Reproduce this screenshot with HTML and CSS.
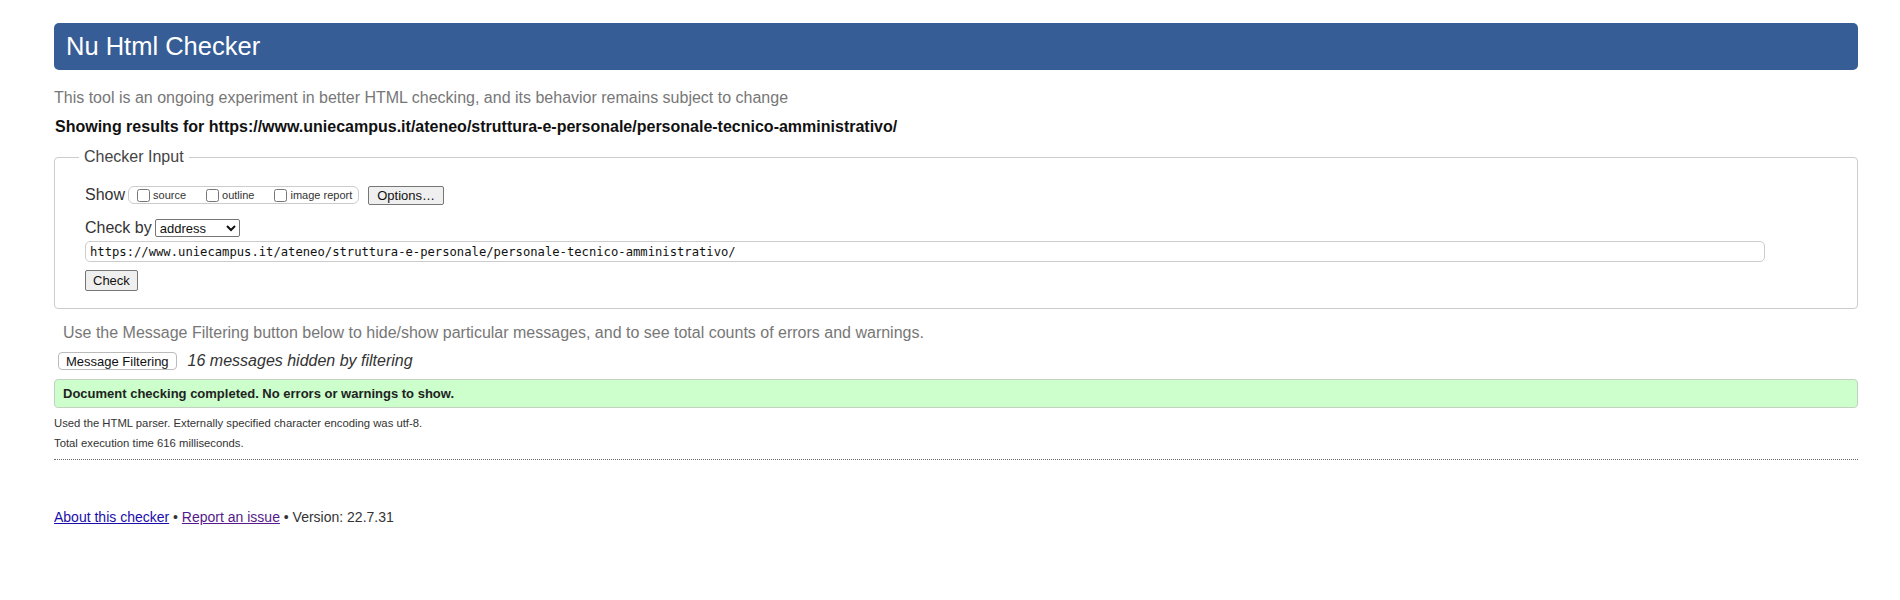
FILE: index.html
```html
<!DOCTYPE html>
<html lang="en">
<head>
  <meta charset="UTF-8">
  <title>Showing results for https://www.uniecampus.it/ateneo/struttura-e-personale/personale-tecnico-amministrativo/ - Nu Html Checker</title>
  <link rel="stylesheet" href="styles.css">
</head>
<body>
  <h1>Nu Html Checker</h1>
  <p class="intro">This tool is an ongoing experiment in better HTML checking, and its behavior remains subject to change</p>
  <p class="results-for">Showing results for https://www.uniecampus.it/ateneo/struttura-e-personale/personale-tecnico-amministrativo/</p>

  <fieldset class="checker-input">
    <legend>Checker Input</legend>

    <div class="row show-row">
      <span class="label">Show</span>
      <span class="show-box">
        <input type="checkbox" id="showsource"><label for="showsource">source</label>
        <input type="checkbox" id="showoutline"><label for="showoutline">outline</label>
        <input type="checkbox" id="showimagereport"><label for="showimagereport" class="last">image report</label>
      </span>
      <button class="btn options">Options…</button>
    </div>

    <div class="row checkby-row">
      <span class="label">Check by</span>
      <select class="checkby">
        <option>address</option>
        <option>file upload</option>
        <option>text input</option>
      </select>
    </div>

    <div class="row url-row">
      <input class="url" type="url" value="https://www.uniecampus.it/ateneo/struttura-e-personale/personale-tecnico-amministrativo/">
    </div>

    <div class="row">
      <button class="btn check">Check</button>
    </div>
  </fieldset>

  <p class="filter-info">Use the Message Filtering button below to hide/show particular messages, and to see total counts of errors and warnings.</p>
  <div class="filter-row">
    <button class="btn filtering">Message Filtering</button>
    <em>16 messages hidden by filtering</em>
  </div>

  <p class="success">Document checking completed. No errors or warnings to show.</p>

  <div class="details">
    <p>Used the HTML parser. Externally specified character encoding was utf-8.</p>
    <p>Total execution time 616 milliseconds.</p>
  </div>

  <p class="footer">
    <a href="#" class="about">About this checker</a> • <a href="#" class="visited">Report an issue</a> • Version: 22.7.31
  </p>
</body>
</html>
```

FILE: styles.css
```css
* {
  box-sizing: border-box;
}

body {
  margin: 0;
  padding: 0 42px 40px 54px;
  background-color: white;
  color: #222;
  font-family: "Liberation Sans", Arial, sans-serif;
  font-size: 16px;
  line-height: 20px;
}

h1 {
  margin: 23px 0 0;
  padding: 0 12px;
  height: 47px;
  line-height: 47px;
  font-size: 25.5px;
  font-weight: normal;
  color: white;
  background-color: #365d95;
  border-radius: 5px;
}

.intro {
  margin: 18px 0 0;
  color: #777;
}

.results-for {
  margin: 9px 0 0 1px;
  font-size: 16px;
  font-weight: bold;
  color: #111;
}

/* 입력 영역 */
.checker-input {
  margin: 10px 0 0;
  padding: 0 92px 17px 24px;
  border: 1px solid #ccc;
  border-radius: 4px;
  min-width: 0;
}

.checker-input legend {
  padding: 0 5px;
  color: #444;
  font-size: 16px;
  line-height: 20px;
}

.row {
  display: flex;
  align-items: center;
  margin-left: 6px;
}

.label {
  color: #333;
}

.show-row {
  margin-top: 17px;
  height: 22px;
}

.show-box {
  display: inline-flex;
  align-items: center;
  height: 18px;
  margin-left: 3px;
  padding: 0 6px 0 4px;
  border: 1px solid #ccc;
  border-radius: 6px;
  font-size: 11px;
  color: #333;
}

.show-box input {
  width: 13px;
  height: 13px;
  margin: 0 3px 0 4px;
}

.show-box label {
  margin-right: 16px;
}

.show-box label.last {
  margin-right: 0;
}

.btn {
  font-family: "Liberation Sans", Arial, sans-serif;
  font-size: 13px;
  color: #111;
  background-color: #efefef;
  border: 1px solid #767676;
  border-radius: 2px;
  padding: 0 8px;
  cursor: pointer;
}

.options {
  margin-left: 9px;
  height: 19px;
}

.checkby-row {
  margin-top: 11px;
  height: 22px;
}

.checkby {
  margin-left: 3px;
  width: 85px;
  height: 18px;
  font-family: "Liberation Sans", Arial, sans-serif;
  font-size: 13px;
  color: #111;
  background-color: white;
  border: 1px solid #767676;
  border-radius: 2px;
}

.url-row {
  margin-top: 2px;
}

.url {
  width: 100%;
  height: 21px;
  padding: 0 4px;
  font-family: "DejaVu Sans Mono", "Liberation Mono", monospace;
  font-size: 12.2px;
  color: #111;
  border: 1px solid #ccc;
  border-radius: 5px;
}

.check {
  margin-top: 8px;
  height: 21px;
  padding: 0 7px;
}

/* 결과 영역 */
.filter-info {
  margin: 14px 0 0 9px;
  color: #777;
}

.filter-row {
  display: flex;
  align-items: center;
  margin: 8px 0 0 4px;
  height: 20px;
}

.filtering {
  height: 18px;
  padding: 0 7px;
  background-color: white;
  border: 1px solid #bbb;
  border-radius: 4px;
}

.filter-row em {
  margin-left: 11px;
  color: #333;
}

.success {
  margin: 8px 0 0;
  padding: 0 8px;
  height: 29px;
  line-height: 27px;
  font-size: 13px;
  font-weight: bold;
  background-color: #ccffcc;
  border: 1px solid #c2d2c2;
  border-radius: 4px;
}

.details {
  margin-top: 5px;
  padding-bottom: 6px;
  border-bottom: 1px dotted #666;
  font-size: 11.3px;
  color: #333;
}

.details p {
  margin: 0;
}

.footer {
  margin: 47px 0 0;
  font-size: 14px;
  color: #333;
}

.footer a {
  color: #1a0dab;
}

.footer a.visited {
  color: #551a8b;
}
```
